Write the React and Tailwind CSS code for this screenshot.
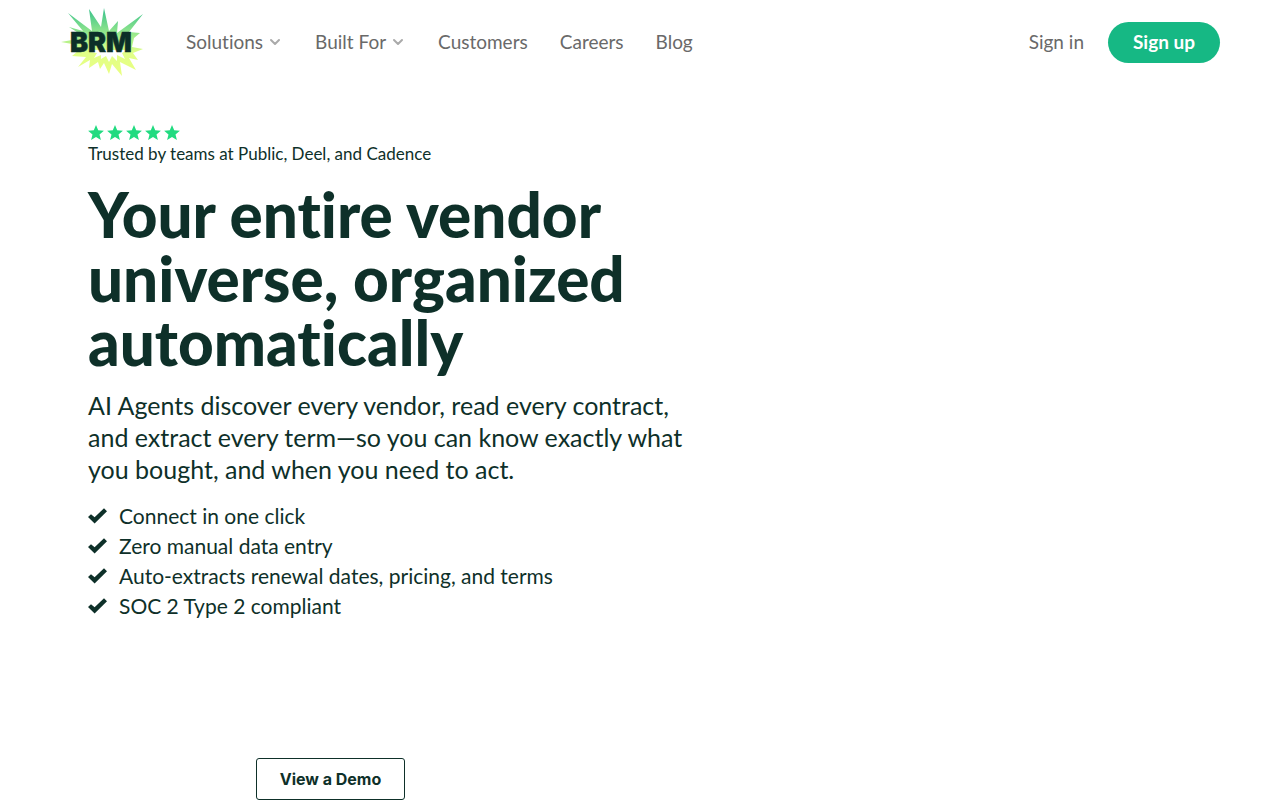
import React from 'react';
import { ChevronDown } from 'lucide-react';

const navLinks = [
  { label: 'Solutions', menu: true },
  { label: 'Built For', menu: true },
  { label: 'Customers' },
  { label: 'Careers' },
  { label: 'Blog' },
];

const benefits = [
  'Connect in one click',
  'Zero manual data entry',
  'Auto-extracts renewal dates, pricing, and terms',
  'SOC 2 Type 2 compliant',
];

const Logo = () => (
  <svg viewBox="0 0 84 70" className="w-[84px] h-[70px]" role="img" aria-label="BRM">
    <defs>
      <linearGradient id="burst" x1="0" y1="0" x2="0" y2="1">
        <stop offset="0" stopColor="#35c08c" />
        <stop offset="0.38" stopColor="#98e88c" />
        <stop offset="0.65" stopColor="#e0ff88" />
        <stop offset="1" stopColor="#eaff80" />
      </linearGradient>
    </defs>
    <path
      fill="url(#burst)"
      d="M8 6 L32 24 L29 2 L41 20 L44 1 L49 24 L58 14 L57 26 L83 7 L69 25 L80 26 L74 31 L72 40 L83 42 L73 46 L78 53 L69 51 L76 63 L60 55 L62 69 L52 57 L49 67 L44 56 L40 62 L38 55 L29 61 L30 53 L18 60 L26 50 L12 49 L18 44 L12 37 L1 35 L12 33 L20 27 L9 20 L23 24 Z"
    />
    <path fill="#fff" d="M34 43 L68 43 L62 46 L65 52 L57 48 L57 54 L52 49 L49 55 L46 49 L41 52 L41 48 L34 51 L37 46 L30 45 Z" />
    <text
      x="10"
      y="45"
      fontSize="27"
      fontWeight="900"
      fill="#0c2f28"
      stroke="#0c2f28"
      strokeWidth="0.5"
      className="font-['Inter',sans-serif]"
    >
      BRM
    </text>
  </svg>
);

const Star = () => (
  <svg viewBox="0 0 16 16" className="w-4 h-4" fill="#21db80" aria-hidden="true">
    <path d="M8 0 L10.2 5.3 L15.9 5.7 L11.5 9.4 L12.9 15 L8 12 L3.1 15 L4.5 9.4 L0.1 5.7 L5.8 5.3 Z" />
  </svg>
);

const Check = () => (
  <svg viewBox="0 0 19 16" className="w-[19px] h-4 shrink-0" fill="#0e3029" aria-hidden="true">
    <path d="M0 9 L3 6.2 L6.6 9.2 L16 0.3 L19 3.2 L6.6 15.6 Z" />
  </svg>
);

const App = () => {
  return (
    <div className="min-h-screen bg-white font-['Lato',sans-serif] text-[#0e3029] [font-variant-ligatures:none]">
      <header className="flex items-center justify-between px-[60px] pt-[7px]">
        <div className="flex items-center">
          <a href="#">
            <Logo />
          </a>
          <nav className="ml-[42px] flex items-center gap-8 text-[19px] leading-7 text-[#696969]">
            {navLinks.map((link) =>
              link.menu ? (
                <button key={link.label} type="button" className="flex items-center gap-1">
                  {link.label}
                  <ChevronDown className="w-4 h-4 text-[#aaa]" strokeWidth={3} />
                </button>
              ) : (
                <a key={link.label} href="#">{link.label}</a>
              )
            )}
          </nav>
        </div>
        <div className="flex items-center gap-6 text-[19px] leading-7">
          <a href="#" className="text-[#696969]">Sign in</a>
          <button type="button" className="w-28 h-[41px] rounded-full bg-[#16b884] font-bold text-white">
            Sign up
          </button>
        </div>
      </header>

      <main className="px-[88px] pt-12">
        <div className="flex gap-[3px]" role="img" aria-label="5 stars">
          {[1, 2, 3, 4, 5].map((n) => (
            <Star key={n} />
          ))}
        </div>
        <p className="mt-px text-[17px] leading-6">Trusted by teams at Public, Deel, and Cadence</p>
        <h1 className="mt-4 max-w-[600px] text-[62px] leading-16 font-black">
          Your entire vendor universe, organized automatically
        </h1>
        <p className="mt-[15px] max-w-[610px] text-[25px] leading-8">
          AI Agents discover every vendor, read every contract, and extract every term—so you can know exactly what you bought, and when you need to act.
        </p>
        <ul className="mt-4 text-[21px] leading-[30px]">
          {benefits.map((benefit) => (
            <li key={benefit} className="flex items-center gap-3">
              <Check />
              {benefit}
            </li>
          ))}
        </ul>
        <button
          type="button"
          className="mt-[137px] ml-42 block w-[149px] h-[42px] rounded-[3px] border border-[#0e3029] font-['Inter',sans-serif] text-base font-bold"
        >
          View a Demo
        </button>
      </main>
    </div>
  );
};

export default App;
